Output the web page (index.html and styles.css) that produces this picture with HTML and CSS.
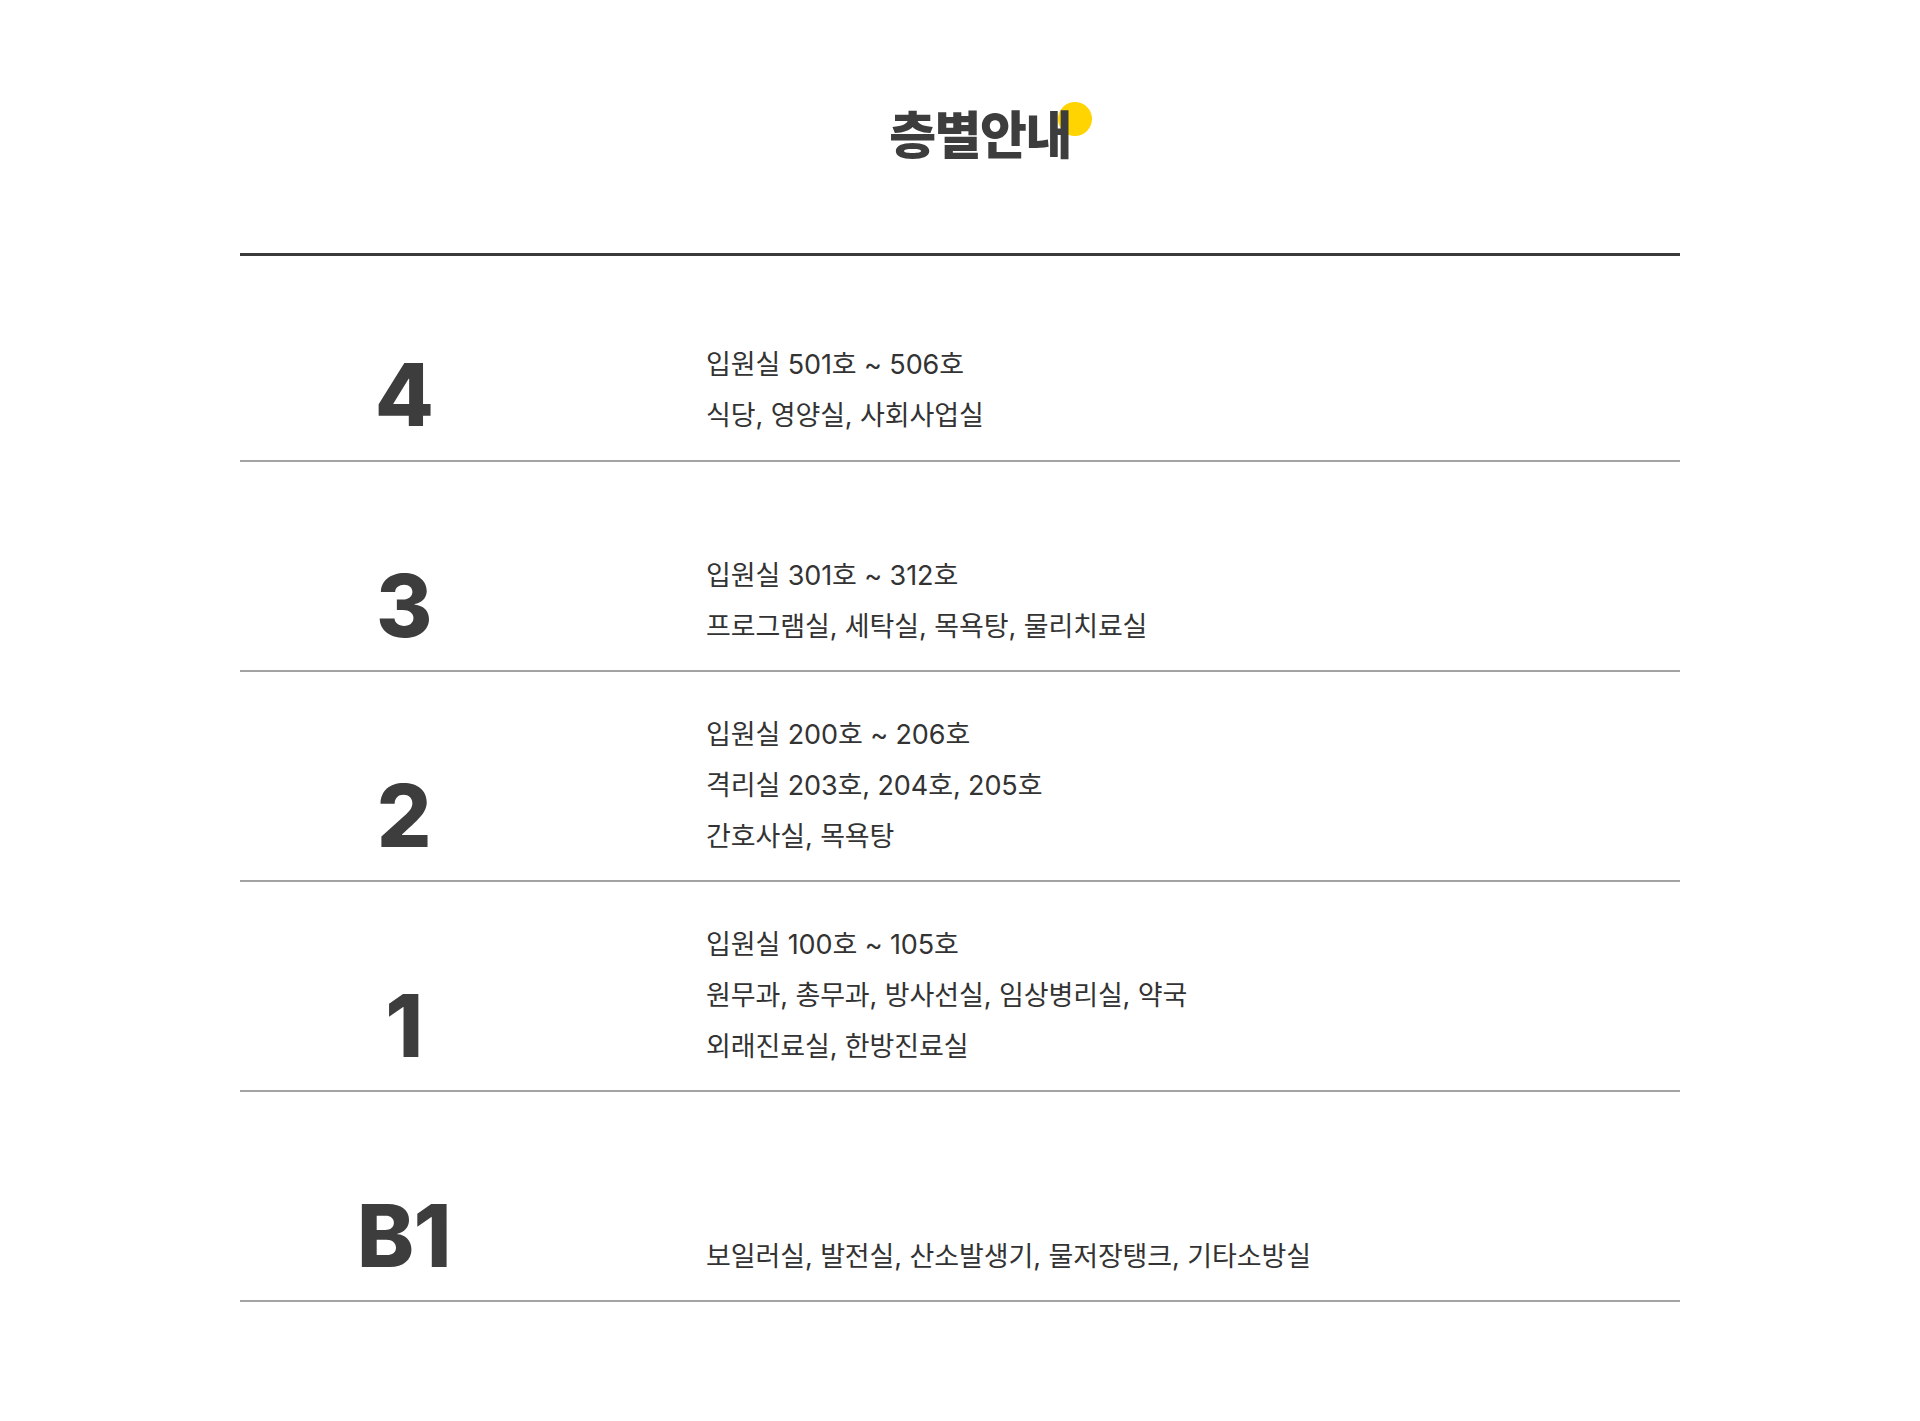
FILE: index.html
```html
<!DOCTYPE html>
<html lang="ko">
<head>
<meta charset="utf-8">
<title>층별안내</title>
<link rel="stylesheet" href="styles.css">
</head>
<body>
<section class="floor-guide">
  <div class="title-wrap">
    <h2 class="title">층별안내</h2>
  </div>
  <ul class="floors">
    <li class="floor">
      <div class="num">4</div>
      <ul class="rooms">
        <li>입원실 501호 ~ 506호</li>
        <li>식당, 영양실, 사회사업실</li>
      </ul>
    </li>
    <li class="floor">
      <div class="num">3</div>
      <ul class="rooms">
        <li>입원실 301호 ~ 312호</li>
        <li>프로그램실, 세탁실, 목욕탕, 물리치료실</li>
      </ul>
    </li>
    <li class="floor">
      <div class="num">2</div>
      <ul class="rooms">
        <li>입원실 200호 ~ 206호</li>
        <li>격리실 203호, 204호, 205호</li>
        <li>간호사실, 목욕탕</li>
      </ul>
    </li>
    <li class="floor">
      <div class="num">1</div>
      <ul class="rooms">
        <li>입원실 100호 ~ 105호</li>
        <li>원무과, 총무과, 방사선실, 임상병리실, 약국</li>
        <li>외래진료실, 한방진료실</li>
      </ul>
    </li>
    <li class="floor">
      <div class="num">B1</div>
      <ul class="rooms">
        <li>보일러실, 발전실, 산소발생기, 물저장탱크, 기타소방실</li>
      </ul>
    </li>
  </ul>
</section>
</body>
</html>
```

FILE: styles.css
```css
html, body {
  margin: 0;
  padding: 0;
  background: #ffffff;
}

body {
  font-family: "Inter", "Noto Sans CJK KR", sans-serif;
  color: #333333;
}

.floor-guide {
  padding-top: 103px;
  padding-bottom: 118px;
}

.title-wrap {
  text-align: center;
  padding-left: 40px;
  margin-bottom: 91px;
}

.title {
  position: relative;
  display: inline-block;
  margin: 0;
  font-family: "Noto Sans CJK KR", sans-serif;
  font-size: 51px;
  font-weight: 800;
  line-height: 59px;
  letter-spacing: -1.5px;
  color: #3d3d3d;
  z-index: 0;
}

.title::after {
  content: "";
  position: absolute;
  width: 34px;
  height: 34px;
  border-radius: 50%;
  background: #ffd400;
  right: -21px;
  top: -1px;
  z-index: -1;
}

.floors {
  list-style: none;
  margin: 0 auto;
  padding: 0;
  width: 1440px;
  border-top: 3px solid #3a3a3a;
}

.floor {
  display: flex;
  align-items: flex-end;
  box-sizing: border-box;
  height: 210px;
  padding-bottom: 18px;
  border-bottom: 2px solid #a3a3a3;
}

.floor:first-child {
  height: 206px;
  padding-bottom: 19px;
}

.num {
  width: 328px;
  flex: none;
  padding-bottom: 3px;
  text-align: center;
  font-family: "Inter", sans-serif;
  font-size: 86px;
  font-weight: 800;
  line-height: 86px;
  letter-spacing: -0.5px;
  color: #3d3d3d;
}

.rooms {
  list-style: none;
  margin: 0 0 0 138px;
  padding: 0;
}

.rooms li {
  font-size: 27px;
  line-height: 51px;
  color: #333333;
  letter-spacing: -0.1px;
}
```
